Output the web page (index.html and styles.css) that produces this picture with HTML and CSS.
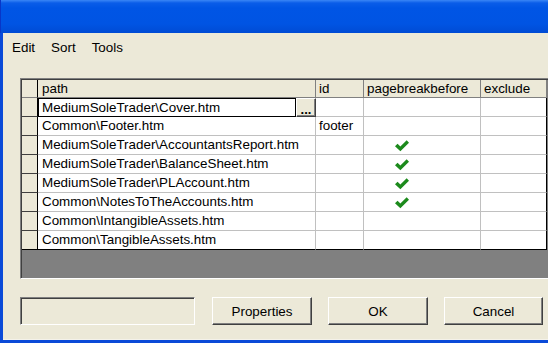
FILE: index.html
```html
<!DOCTYPE html>
<html lang="en">
<head>
    <meta charset="UTF-8">
    <title>Report Contents</title>
    <link rel="stylesheet" href="styles.css">
</head>
<body>

    <div class="window">
        <div class="titlebar"></div>

        <div class="client">

            <div class="menubar">
                <span>Edit</span>
                <span>Sort</span>
                <span>Tools</span>
            </div>

            <div class="grid">
                <div class="sheet">

                    <div class="row head">
                        <div class="cell rh"></div>
                        <div class="cell path">path</div>
                        <div class="cell">id</div>
                        <div class="cell">pagebreakbefore</div>
                        <div class="cell last">exclude</div>
                    </div>

                    <div class="row">
                        <div class="cell rh"></div>
                        <div class="cell path editing">
                            <div class="edit">MediumSoleTrader\Cover.htm</div>
                            <div class="dots">...</div>
                        </div>
                        <div class="cell"></div>
                        <div class="cell"></div>
                        <div class="cell last"></div>
                    </div>

                    <div class="row">
                        <div class="cell rh"></div>
                        <div class="cell path">Common\Footer.htm</div>
                        <div class="cell">footer</div>
                        <div class="cell"></div>
                        <div class="cell last"></div>
                    </div>

                    <div class="row">
                        <div class="cell rh"></div>
                        <div class="cell path">MediumSoleTrader\AccountantsReport.htm</div>
                        <div class="cell"></div>
                        <div class="cell tick"><svg class="check" viewBox="0 0 12 10"><path d="M0 5.2 L2.2 3 L4.6 5.4 L10 0 L12 2.2 L4.6 9.6 Z"/></svg></div>
                        <div class="cell last"></div>
                    </div>

                    <div class="row">
                        <div class="cell rh"></div>
                        <div class="cell path">MediumSoleTrader\BalanceSheet.htm</div>
                        <div class="cell"></div>
                        <div class="cell tick"><svg class="check" viewBox="0 0 12 10"><path d="M0 5.2 L2.2 3 L4.6 5.4 L10 0 L12 2.2 L4.6 9.6 Z"/></svg></div>
                        <div class="cell last"></div>
                    </div>

                    <div class="row">
                        <div class="cell rh"></div>
                        <div class="cell path">MediumSoleTrader\PLAccount.htm</div>
                        <div class="cell"></div>
                        <div class="cell tick"><svg class="check" viewBox="0 0 12 10"><path d="M0 5.2 L2.2 3 L4.6 5.4 L10 0 L12 2.2 L4.6 9.6 Z"/></svg></div>
                        <div class="cell last"></div>
                    </div>

                    <div class="row">
                        <div class="cell rh"></div>
                        <div class="cell path">Common\NotesToTheAccounts.htm</div>
                        <div class="cell"></div>
                        <div class="cell tick"><svg class="check" viewBox="0 0 12 10"><path d="M0 5.2 L2.2 3 L4.6 5.4 L10 0 L12 2.2 L4.6 9.6 Z"/></svg></div>
                        <div class="cell last"></div>
                    </div>

                    <div class="row">
                        <div class="cell rh"></div>
                        <div class="cell path">Common\IntangibleAssets.htm</div>
                        <div class="cell"></div>
                        <div class="cell"></div>
                        <div class="cell last"></div>
                    </div>

                    <div class="row bottom">
                        <div class="cell rh"></div>
                        <div class="cell path">Common\TangibleAssets.htm</div>
                        <div class="cell"></div>
                        <div class="cell"></div>
                        <div class="cell last"></div>
                    </div>

                </div>
            </div>

            <div class="footer">
                <div class="status"></div>
                <button class="btn props">Properties</button>
                <button class="btn">OK</button>
                <button class="btn cancel">Cancel</button>
            </div>

        </div>
    </div>

</body>
</html>
```

FILE: styles.css
```css
*{
    box-sizing: border-box;
}

body{
    margin: 0;
    background-color: #ece9d8;
    font-family: "Liberation Sans", Arial, sans-serif;
    font-size: 13.4px;
    color: #000;
}

.window{
    width: 548px;
    height: 343px;
    overflow: hidden;
    display: flex;
    flex-direction: column;
}

.titlebar{
    flex: none;
    height: 33px;
    background: linear-gradient(#3a86f6 0px, #0a5de8 3px, #0055e5 8px, #0054e3 24px, #004bd4 33px);
    box-shadow: inset 1px 0 #0836c8;
}

.client{
    flex: 1;
    background-color: #ece9d8;
    border-left: 3px solid #0a4ad8;
    border-bottom: 3px solid #0a4ad8;
    box-shadow: inset 0 -1px #f4f2ea;
}

/* menu */

.menubar{
    height: 25px;
    padding: 7px 0 0 1px;
    line-height: 16px;
    display: flex;
}

.menubar span{
    padding: 0 8px;
}

/* data grid */

.grid{
    width: 540px;
    height: 201px;
    margin: 20px 0 0 17px;
    border: 1px solid;
    border-color: #808080 #fff #fff #808080;
}

.sheet{
    height: 100%;
    background-color: #808080;
    border-top: 1px solid #404040;
    border-left: 1px solid #404040;
}

.row{
    display: grid;
    grid-template-columns: 16px 278px 48px 117px 66px;
    height: 19px;
}

.cell{
    background-color: #fff;
    border-right: 1px solid #c0c0c0;
    border-bottom: 1px solid #c0c0c0;
    padding-left: 3px;
    line-height: 18px;
    white-space: nowrap;
    overflow: hidden;
}

.cell.path{
    padding-left: 4px;
}

.cell.last{
    border-right-color: #000;
}

.cell.rh{
    background-color: #ece9d8;
    border-right-color: #000;
    border-bottom-color: #404040;
}

.head{
    height: 18px;
}

.head .cell{
    background-color: #ece9d8;
    border-right-color: #808080;
    border-bottom-color: #808080;
    line-height: 17px;
}

.head .cell.rh{
    border-right-color: #000;
}

.bottom .cell{
    border-bottom-color: #000;
}

.cell.editing{
    padding: 0;
    display: flex;
    border: none;
}

.edit{
    flex: 1;
    border: 1px solid #000;
    padding-left: 3px;
    line-height: 17px;
}

.dots{
    width: 20px;
    background-color: #ece9d8;
    border: 1px solid;
    border-color: #fff #404040 #404040 #fff;
    box-shadow: inset -1px -1px #808080;
    text-align: center;
    font-weight: bold;
    font-size: 13px;
    line-height: 21px;
    letter-spacing: 0;
}

.tick{
    padding-left: 31px;
}

.check{
    display: block;
    width: 14px;
    height: 12px;
    margin-top: 4px;
    fill: #1c8a1c;
}

/* bottom buttons */

.footer{
    display: flex;
    height: 28px;
    margin: 18px 0 0 17px;
}

.status{
    width: 175px;
    border: 1px solid;
    border-color: #808080 #fff #fff #808080;
    box-shadow: inset 1px 1px #404040;
}

.btn{
    width: 100px;
    margin-left: 16px;
    background-color: #ece9d8;
    border: 1px solid;
    border-color: #fff #404040 #404040 #fff;
    box-shadow: inset -1px -1px #808080;
    font-family: "Liberation Sans", Arial, sans-serif;
    font-size: 13.4px;
    color: #000;
    padding: 0;
}

.btn.props{
    margin-left: 17px;
}

.btn.cancel{
    width: 99px;
}
```
